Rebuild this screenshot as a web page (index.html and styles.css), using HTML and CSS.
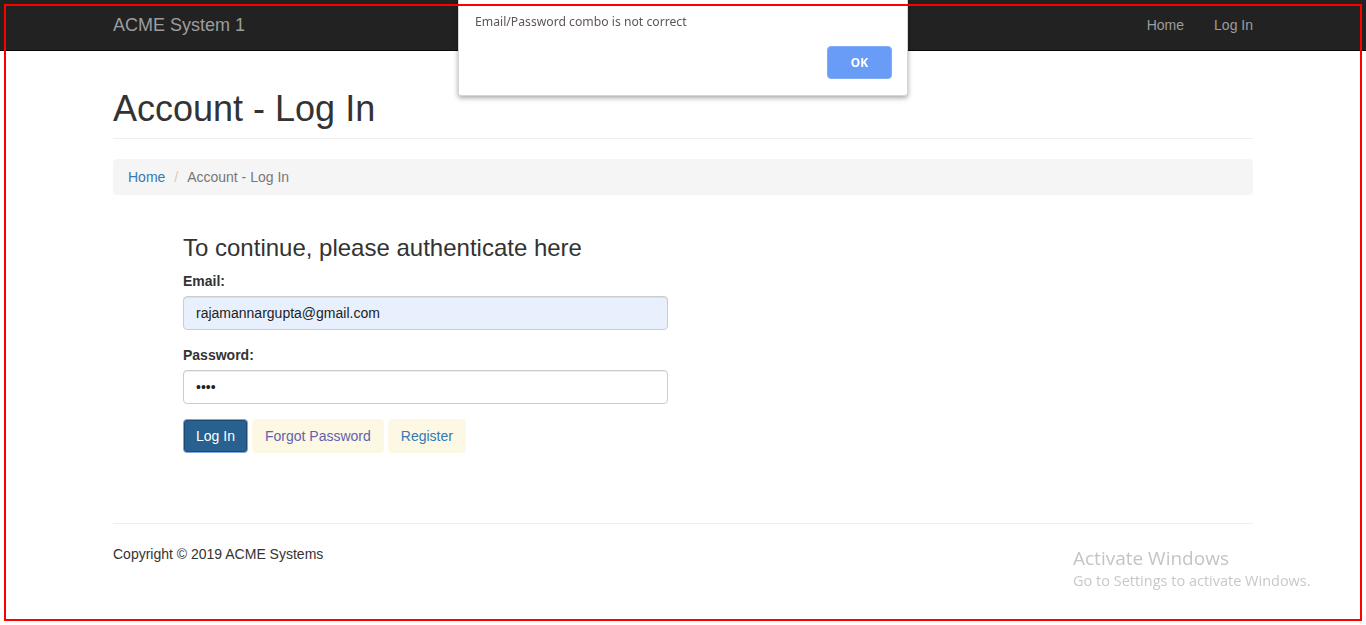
FILE: index.html
```html
<!DOCTYPE html>
<html lang="en">
<head>
<meta charset="utf-8">
<title>Account - Log In</title>
<link rel="stylesheet" href="styles.css">
</head>
<body>
<nav class="navbar">
  <div class="container navbar-inner">
    <a class="brand" href="#">ACME System 1</a>
    <ul class="nav-links">
      <li><a href="#">Home</a></li>
      <li><a href="#">Log In</a></li>
    </ul>
  </div>
</nav>

<main class="container">
  <h1 class="page-header">Account - Log In</h1>
  <ol class="breadcrumb">
    <li><a href="#">Home</a></li>
    <li class="active">Account - Log In</li>
  </ol>

  <section class="login">
    <h3 class="login-title">To continue, please authenticate here</h3>
    <div class="form-group">
      <label class="label" for="email">Email:</label>
      <input class="form-control autofill" id="email" type="text" value="rajamannargupta@gmail.com">
    </div>
    <div class="form-group">
      <label class="label" for="password">Password:</label>
      <input class="form-control" id="password" type="password" value="abcd">
    </div>
    <div class="actions">
      <button class="btn btn-primary" type="button">Log In</button>
      <a class="btn btn-soft visited" href="#">Forgot Password</a>
      <a class="btn btn-soft" href="#">Register</a>
    </div>
  </section>

  <hr class="divider">
  <footer class="footer">
    <p>Copyright © 2019 ACME Systems</p>
  </footer>
</main>

<div class="alert-dialog">
  <p class="alert-message">Email/Password combo is not correct</p>
  <div class="alert-actions">
    <button class="alert-ok" type="button">OK</button>
  </div>
</div>

<div class="watermark">
  <div class="wm-title">Activate Windows</div>
  <div class="wm-sub">Go to Settings to activate Windows.</div>
</div>

<div class="frame"></div>
</body>
</html>
```

FILE: styles.css
```css
* { box-sizing: border-box; }

html, body {
  margin: 0;
  padding: 0;
  background: #fff;
}

body {
  font-family: "Liberation Sans", Arial, Helvetica, sans-serif;
  font-size: 14px;
  line-height: 20px;
  color: #333;
}

a { text-decoration: none; color: #337ab7; }

.container {
  width: 1170px;
  margin: 0 auto;
  padding: 0 15px;
}

/* Navbar */
.navbar {
  height: 51px;
  background: #222;
  border-bottom: 1px solid #080808;
}

.navbar-inner {
  display: flex;
  justify-content: space-between;
  align-items: flex-start;
  height: 50px;
}

.brand {
  font-size: 18px;
  line-height: 20px;
  padding: 15px 0;
  color: #9d9d9d;
}

.nav-links {
  list-style: none;
  margin: 0 -15px 0 0;
  padding: 0;
  display: flex;
}

.nav-links a {
  display: block;
  padding: 15px;
  line-height: 20px;
  color: #9d9d9d;
}

/* Header */
.page-header {
  font-size: 36px;
  font-weight: 500;
  line-height: 1.1;
  margin: 38px 0 20px;
  padding-bottom: 9px;
  border-bottom: 1px solid #eee;
}

.breadcrumb {
  list-style: none;
  margin: 0 0 20px;
  padding: 8px 15px;
  background: #f5f5f5;
  border-radius: 4px;
  display: flex;
}

.breadcrumb li + li { margin-left: 4px; }

.breadcrumb li + li::before {
  content: "/\00a0";
  padding: 0 5px;
  color: #ccc;
}

.breadcrumb .active { color: #777; }

/* Login form */
.login {
  display: flow-root;
  margin-left: 70px;
  width: 485px;
  padding-bottom: 50px;
}

.login-title {
  font-size: 24px;
  font-weight: 500;
  line-height: 1.1;
  margin: 20px 0 10px;
}

.form-group { margin-bottom: 15px; }

.label {
  display: block;
  font-weight: 700;
  margin-bottom: 5px;
}

.form-control {
  display: block;
  width: 100%;
  height: 34px;
  padding: 6px 12px;
  font-family: inherit;
  font-size: 14px;
  line-height: 20px;
  color: #222;
  background: #fff;
  border: 1px solid #ccc;
  border-radius: 4px;
  box-shadow: inset 0 1px 1px rgba(0,0,0,.075);
}

.form-control.autofill { background: #e8f0fe; }

.actions {
  display: flex;
  gap: 4px;
}

.btn {
  display: inline-block;
  height: 34px;
  padding: 6px 12px;
  font-family: inherit;
  font-size: 14px;
  line-height: 20px;
  border: 1px solid transparent;
  border-radius: 4px;
  cursor: pointer;
}

.btn-primary {
  color: #fff;
  background: #286090;
  border-color: #7ea6e2;
  box-shadow: inset 0 0 0 1px #1d4a72;
}

.btn-soft {
  background: #fcf8e3;
  color: #337ab7;
}

.btn-soft.visited { color: #6063b0; }

/* Footer */
.divider {
  margin: 20px 0;
  border: 0;
  border-top: 1px solid #eee;
}

.footer p { margin: 0 0 10px; }

/* Browser alert dialog overlay */
.alert-dialog {
  position: fixed;
  top: 0;
  left: 458px;
  width: 450px;
  height: 96px;
  background: #fff;
  border: 1px solid #d6d6d6;
  border-top: 0;
  border-radius: 0 0 3px 3px;
  box-shadow: 0 2px 5px rgba(0,0,0,.35);
  font-family: "Noto Sans", "Open Sans", sans-serif;
}

.alert-message {
  margin: 0;
  padding: 14px 0 0 16px;
  font-size: 12.2px;
  line-height: 16px;
  color: #5f5555;
}

.alert-actions {
  display: flex;
  justify-content: flex-end;
  padding: 16px 15px 0 0;
}

.alert-ok {
  width: 65px;
  height: 33px;
  background: #689cf6;
  border: 1px solid #82adf5;
  border-radius: 4px;
  color: #fff;
  font-family: "Noto Sans", "Open Sans", sans-serif;
  font-size: 12px;
  font-weight: 700;
}

/* Windows watermark */
.watermark {
  position: fixed;
  left: 1073px;
  top: 545px;
  font-family: "Open Sans", "Noto Sans", sans-serif;
  color: #c4c4c4;
}

.wm-title {
  font-size: 19px;
  line-height: 26px;
}

.wm-sub {
  font-size: 14.5px;
  line-height: 20px;
  color: #c8c8c8;
}

/* Red annotation frame */
.frame {
  position: fixed;
  left: 4px;
  top: 4px;
  width: 1358px;
  height: 617px;
  border: 2px solid #f00;
  pointer-events: none;
}
```
